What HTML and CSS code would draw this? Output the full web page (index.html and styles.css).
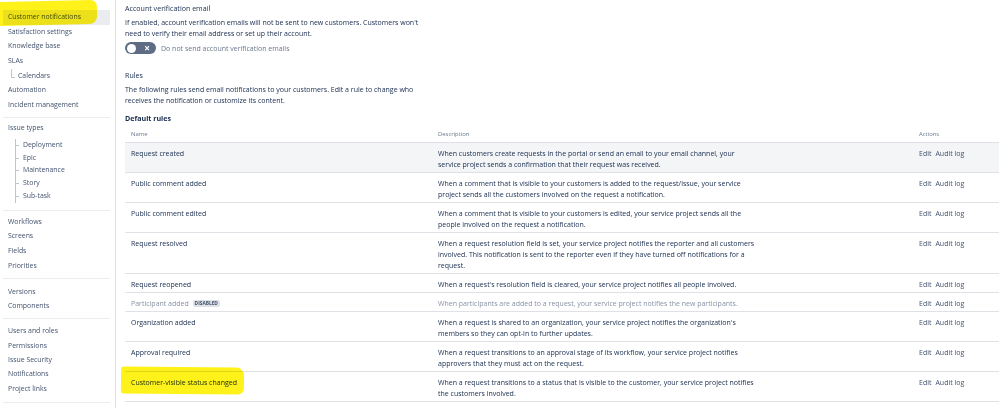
FILE: index.html
```html
<!DOCTYPE html>
<html lang="en">
<head>
  <meta charset="UTF-8">
  <title>Customer notifications</title>
  <link rel="stylesheet" href="styles.css">
</head>
<body>
  <div class="page">
    <nav class="sidebar">
      <ul class="group g-first">
        <li class="item selected">Customer notifications</li>
        <li class="item">Satisfaction settings</li>
        <li class="item">Knowledge base</li>
        <li class="item">SLAs</li>
        <li class="item sub single">Calendars</li>
        <li class="item">Automation</li>
        <li class="item">Incident management</li>
      </ul>
      <ul class="group g-types">
        <li class="item">Issue types</li>
        <li>
          <ul class="tree">
            <li>Deployment</li>
            <li>Epic</li>
            <li>Maintenance</li>
            <li>Story</li>
            <li>Sub-task</li>
          </ul>
        </li>
      </ul>
      <ul class="group g-work">
        <li class="item">Workflows</li>
        <li class="item">Screens</li>
        <li class="item">Fields</li>
        <li class="item">Priorities</li>
      </ul>
      <ul class="group g-versions">
        <li class="item">Versions</li>
        <li class="item">Components</li>
      </ul>
      <ul class="group g-users">
        <li class="item">Users and roles</li>
        <li class="item">Permissions</li>
        <li class="item">Issue Security</li>
        <li class="item">Notifications</li>
        <li class="item">Project links</li>
      </ul>
      <div class="marker marker-nav"></div>
    </nav>

    <main class="content">
      <h2>Account verification email</h2>
      <p class="lead">If enabled, account verification emails will not be sent to new customers. Customers won't need to verify their email address or set up their account.</p>
      <label class="toggle-row">
        <span class="toggle"><span class="knob"></span><span class="cross">&times;</span></span>
        <span class="toggle-label">Do not send account verification emails</span>
      </label>

      <h2 class="rules">Rules</h2>
      <p class="lead">The following rules send email notifications to your customers. Edit a rule to change who receives the notification or customize its content.</p>

      <h3>Default rules</h3>
      <table class="rules-table">
        <thead>
          <tr>
            <th class="c-name">Name</th>
            <th class="c-desc">Description</th>
            <th class="c-act">Actions</th>
          </tr>
        </thead>
        <tbody>
          <tr class="hover">
            <td>Request created</td>
            <td><div class="desc">When customers create requests in the portal or send an email to your email channel, your service project sends a confirmation that their request was received.</div></td>
            <td class="act"><a>Edit</a><a>Audit log</a></td>
          </tr>
          <tr>
            <td>Public comment added</td>
            <td><div class="desc">When a comment that is visible to your customers is added to the request/issue, your service project sends all the customers involved on the request a notification.</div></td>
            <td class="act"><a>Edit</a><a>Audit log</a></td>
          </tr>
          <tr>
            <td>Public comment edited</td>
            <td><div class="desc">When a comment that is visible to your customers is edited, your service project sends all the people involved on the request a notification.</div></td>
            <td class="act"><a>Edit</a><a>Audit log</a></td>
          </tr>
          <tr>
            <td>Request resolved</td>
            <td><div class="desc">When a request resolution field is set, your service project notifies the reporter and all customers involved. This notification is sent to the reporter even if they have turned off notifications for a request.</div></td>
            <td class="act"><a>Edit</a><a>Audit log</a></td>
          </tr>
          <tr>
            <td>Request reopened</td>
            <td><div class="desc">When a request's resolution field is cleared, your service project notifies all people involved.</div></td>
            <td class="act"><a>Edit</a><a>Audit log</a></td>
          </tr>
          <tr class="disabled">
            <td>Participant added <span class="lozenge">Disabled</span></td>
            <td><div class="desc">When participants are added to a request, your service project notifies the new participants.</div></td>
            <td class="act"><a>Edit</a><a>Audit log</a></td>
          </tr>
          <tr>
            <td>Organization added</td>
            <td><div class="desc">When a request is shared to an organization, your service project notifies the organization's members so they can opt-in to further updates.</div></td>
            <td class="act"><a>Edit</a><a>Audit log</a></td>
          </tr>
          <tr>
            <td>Approval required</td>
            <td><div class="desc">When a request transitions to an approval stage of its workflow, your service project notifies approvers that they must act on the request.</div></td>
            <td class="act"><a>Edit</a><a>Audit log</a></td>
          </tr>
          <tr class="last">
            <td>Customer-visible status changed</td>
            <td><div class="desc">When a request transitions to a status that is visible to the customer, your service project notifies the customers involved.</div></td>
            <td class="act"><a>Edit</a><a>Audit log</a></td>
          </tr>
        </tbody>
      </table>
      <div class="marker marker-row"></div>
    </main>
  </div>
</body>
</html>
```

FILE: styles.css
```css
:root {
  --text: #172b4d;
  --nav-text: #42526e;
  --muted: #6b778c;
  --line: #dfe1e6;
  --hover: #f4f5f7;
  --marker: #fff21a;
}
* {
  box-sizing: border-box;
}
body {
  margin: 0;
  background: #fff;
  font-family: "Open Sans", "Noto Sans", sans-serif;
  font-size: 7px;
  line-height: 11px;
  color: var(--text);
  overflow: hidden;
}
.page {
  display: flex;
  height: 408px;
}

/* Levé menu */
.sidebar {
  position: relative;
  width: 116px;
  flex: none;
  padding: 0 5px 0 3px;
  border-right: 1px solid var(--line);
  color: var(--nav-text);
  font-size: 6.9px;
}
.group {
  list-style: none;
  margin: 0;
  border-bottom: 1px solid #ebecf0;
}
.g-first {
  padding: 10px 0 4px;
}
.g-types {
  padding: 3.6px 0 7.4px;
}
.g-work {
  padding: 3.6px 0 4.6px;
}
.g-versions {
  padding: 6.2px 0 5.8px;
}
.g-users {
  padding: 5.6px 0 6px;
}
.item {
  height: 14.7px;
  line-height: 14.7px;
  padding-left: 5px;
}
.g-versions .item {
  height: 13.5px;
  line-height: 13.5px;
}
.g-users .item {
  height: 14.3px;
  line-height: 14.3px;
}
.item.selected {
  background: #ebecf0;
}
.item.sub {
  position: relative;
  padding-left: 15px;
}
.item.single::before {
  content: "";
  position: absolute;
  left: 8px;
  top: 0;
  width: 3px;
  height: 8px;
  border-left: 1px solid #c1c7d0;
  border-bottom: 1px solid #c1c7d0;
}
.tree {
  list-style: none;
  margin: 2.7px 0 0 12px;
  padding: 0;
  border-left: 1px solid #c1c7d0;
}
.tree li {
  position: relative;
  height: 12.75px;
  line-height: 12.75px;
  padding-left: 7px;
}
.tree li::before {
  content: "";
  position: absolute;
  left: 0;
  top: 6px;
  width: 3px;
  border-top: 1px solid #c1c7d0;
}

/* Obsah */
.content {
  position: relative;
  flex: 1;
  padding: 3px 0 0 9px;
}
h2 {
  margin: 0;
  font-size: 7.1px;
  font-weight: 400;
}
h2.rules {
  margin-top: 16px;
}
.lead {
  margin: 3px 0 0;
  max-width: 306px;
}
.toggle-row {
  display: flex;
  align-items: center;
  gap: 5px;
  margin-top: 3px;
}
.toggle {
  position: relative;
  display: flex;
  align-items: center;
  justify-content: flex-end;
  width: 31px;
  height: 12px;
  padding: 0 6px 0 2px;
  border-radius: 6px;
  background: #5e6c84;
}
.knob {
  position: absolute;
  left: 2px;
  top: 1.5px;
  width: 9px;
  height: 9px;
  border-radius: 50%;
  background: #fff;
}
.cross {
  color: #fff;
  font-size: 10px;
  font-weight: 700;
  line-height: 12px;
}
.toggle-label {
  color: var(--muted);
}
h3 {
  margin: 7px 0 0;
  font-size: 7.1px;
  font-weight: 700;
}

/* Tabulka pravidel */
.rules-table {
  width: 100%;
  margin-top: 2px;
  border-collapse: collapse;
}
.rules-table th {
  padding: 3px 6px 2px;
  text-align: left;
  font-size: 5.9px;
  font-weight: 400;
  color: var(--muted);
}
.c-name {
  width: 307px;
}
.c-desc {
  width: 481px;
}
.rules-table td {
  padding: 5px 6px 2px;
  vertical-align: top;
  border-top: 1px solid var(--line);
}
.rules-table tr.last td {
  border-bottom: 1px solid var(--line);
}
.rules-table tr.hover td {
  background: var(--hover);
}
.desc {
  max-width: 319px;
}
.act a {
  margin-right: 4px;
  color: var(--nav-text);
}
.disabled td {
  color: #8993a4;
}
.disabled td.act {
  color: var(--nav-text);
}
.lozenge {
  display: inline-block;
  margin-left: 2px;
  padding: 0 2px;
  border-radius: 2px;
  background: #dfe1e6;
  color: #42526e;
  font-size: 4.8px;
  font-weight: 700;
  line-height: 7px;
  text-transform: uppercase;
  vertical-align: 1px;
}

/* Žluté zvýraznění */
.marker {
  position: absolute;
  background: var(--marker);
  mix-blend-mode: multiply;
}
.marker-nav {
  left: -4px;
  top: 1px;
  width: 101px;
  height: 24px;
  border-radius: 2px 6px 8px 3px;
  transform: rotate(-1.2deg);
}
.marker-row {
  left: 5px;
  top: 367px;
  width: 123px;
  height: 27px;
  border-radius: 3px 8px 6px 2px;
  transform: rotate(0.6deg);
}
```
